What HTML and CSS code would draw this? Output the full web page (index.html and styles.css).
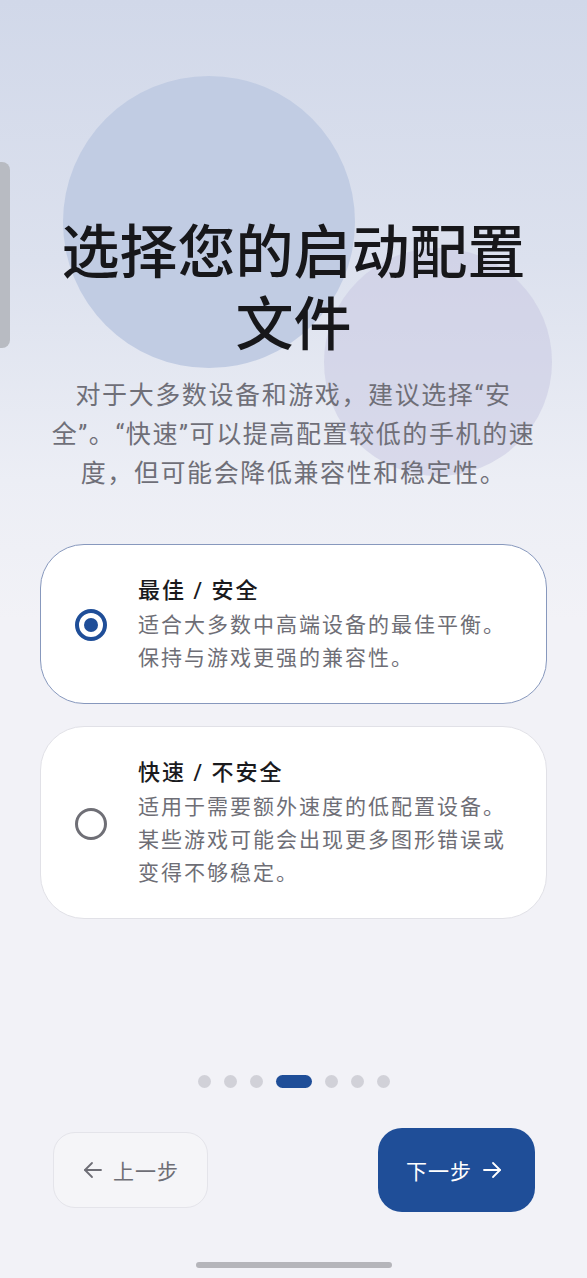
FILE: index.html
```html
<!DOCTYPE html>
<html lang="zh-CN">
<head>
    <meta charset="UTF-8">
    <meta name="viewport" content="width=device-width, initial-scale=1.0">
    <title>启动配置文件</title>
    <link rel="stylesheet" href="styles.css">
</head>
<body>
    <div class="screen">
        <!-- Decorative background circles -->
        <div class="blob blob-blue"></div>
        <div class="blob blob-lilac"></div>
        <div class="side-handle"></div>

        <div class="page">
            <h1 class="title">选择您的启动配置文件</h1>
            <p class="subtitle">对于大多数设备和游戏，建议选择“安全”。“快速”可以提高配置较低的手机的速度，但可能会降低兼容性和稳定性。</p>

            <!-- Profile options -->
            <div class="options">
                <div class="option selected">
                    <span class="radio"></span>
                    <div class="option-text">
                        <h3>最佳 / 安全</h3>
                        <p>适合大多数中高端设备的最佳平衡。保持与游戏更强的兼容性。</p>
                    </div>
                </div>
                <div class="option">
                    <span class="radio"></span>
                    <div class="option-text">
                        <h3>快速 / 不安全</h3>
                        <p>适用于需要额外速度的低配置设备。某些游戏可能会出现更多图形错误或变得不够稳定。</p>
                    </div>
                </div>
            </div>

            <div class="bottom">
                <div class="dots">
                    <span class="dot"></span>
                    <span class="dot"></span>
                    <span class="dot"></span>
                    <span class="dot active"></span>
                    <span class="dot"></span>
                    <span class="dot"></span>
                    <span class="dot"></span>
                </div>
                <div class="nav">
                    <button class="btn btn-back">
                        <svg width="24" height="24" viewBox="0 0 24 24" fill="none" stroke="currentColor" stroke-width="1.8" stroke-linecap="round" stroke-linejoin="round"><path d="M20 12H4"/><path d="M11 5l-7 7 7 7"/></svg>
                        上一步
                    </button>
                    <button class="btn btn-next">
                        下一步
                        <svg width="24" height="24" viewBox="0 0 24 24" fill="none" stroke="currentColor" stroke-width="1.8" stroke-linecap="round" stroke-linejoin="round"><path d="M4 12h16"/><path d="M13 5l7 7-7 7"/></svg>
                    </button>
                </div>
                <div class="home-bar"></div>
            </div>
        </div>
    </div>
</body>
</html>
```

FILE: styles.css
```css
body {
    margin: 0;
    padding: 0;
    font-family: Roboto, "Noto Sans CJK SC", sans-serif;
    background: #f2f2f7;
}
.screen {
    position: relative;
    width: 587px;
    height: 1278px;
    overflow: hidden;
    background: linear-gradient(180deg, #d1d8e9 0%, #dce1ee 260px, #eceef5 480px, #f2f2f7 620px, #f2f2f7 100%);
}
.blob {
    position: absolute;
    border-radius: 50%;
}
.blob-blue {
    left: 63px;
    top: 76px;
    width: 292px;
    height: 292px;
    background: #c1cce3;
}
.blob-lilac {
    left: 324px;
    top: 248px;
    width: 228px;
    height: 228px;
    background: rgba(200, 200, 226, 0.55);
}
.side-handle {
    position: absolute;
    left: 0;
    top: 162px;
    width: 10px;
    height: 186px;
    border-radius: 0 8px 8px 0;
    background: #b8bbc2;
}
.page {
    position: relative;
    height: 100%;
    display: flex;
    flex-direction: column;
    align-items: center;
    padding-top: 217px;
    box-sizing: border-box;
}
.title {
    width: 480px;
    margin: 0;
    font-size: 58px;
    line-height: 72px;
    font-weight: 500;
    color: #17171a;
    text-align: center;
}
.subtitle {
    width: 495px;
    margin: 15px 0 0;
    font-size: 25px;
    line-height: 39px;
    letter-spacing: 1.6px;
    color: #6f6f78;
    text-align: center;
}
.options {
    width: 507px;
    margin-top: 51px;
    display: flex;
    flex-direction: column;
    gap: 22px;
}
.option {
    display: flex;
    align-items: center;
    gap: 31px;
    padding: 30px 30px 28px 34px;
    background: #fff;
    border: 1px solid #e1e1e7;
    border-radius: 44px;
}
.option.selected {
    border: 1.5px solid #8798bd;
}
.radio {
    position: relative;
    flex: none;
    width: 26px;
    height: 26px;
    border: 3px solid #6f6f76;
    border-radius: 50%;
}
.selected .radio {
    border: 4px solid #1f4e98;
    width: 24px;
    height: 24px;
}
.selected .radio::after {
    content: "";
    position: absolute;
    left: 5px;
    top: 5px;
    width: 14px;
    height: 14px;
    border-radius: 50%;
    background: #1f4e98;
}
.option-text h3 {
    margin: 0;
    font-size: 22px;
    line-height: 32px;
    font-weight: 500;
    letter-spacing: 2px;
    color: #1a1a1d;
}
.option-text p {
    margin: 2px 0 0;
    font-size: 21px;
    line-height: 33px;
    letter-spacing: 2px;
    color: #6e6e76;
}
.bottom {
    margin-top: auto;
    width: 100%;
    display: flex;
    flex-direction: column;
    align-items: center;
    padding-bottom: 10px;
}
.dots {
    display: flex;
    align-items: center;
    gap: 13px;
}
.dot {
    width: 13px;
    height: 13px;
    border-radius: 7px;
    background: #d1d1d8;
}
.dot.active {
    width: 36px;
    background: #1f4e98;
}
.nav {
    width: 100%;
    box-sizing: border-box;
    margin-top: 40px;
    padding: 0 52px 0 53px;
    display: flex;
    justify-content: space-between;
    align-items: center;
}
.btn {
    display: flex;
    align-items: center;
    gap: 8px;
    font-family: inherit;
    font-size: 21px;
    letter-spacing: 1px;
    border-radius: 22px;
    cursor: pointer;
}
.btn-back {
    width: 155px;
    height: 76px;
    padding: 0 0 0 27px;
    background: #f5f5f8;
    border: 1px solid #e4e4ea;
    color: #6e6e76;
}
.btn-next {
    width: 157px;
    height: 84px;
    padding: 0 0 0 28px;
    background: #1f4e98;
    border: none;
    border-radius: 24px;
    color: #fff;
}
.home-bar {
    margin-top: 50px;
    width: 196px;
    height: 6px;
    border-radius: 3px;
    background: #b5b5ba;
}
```
